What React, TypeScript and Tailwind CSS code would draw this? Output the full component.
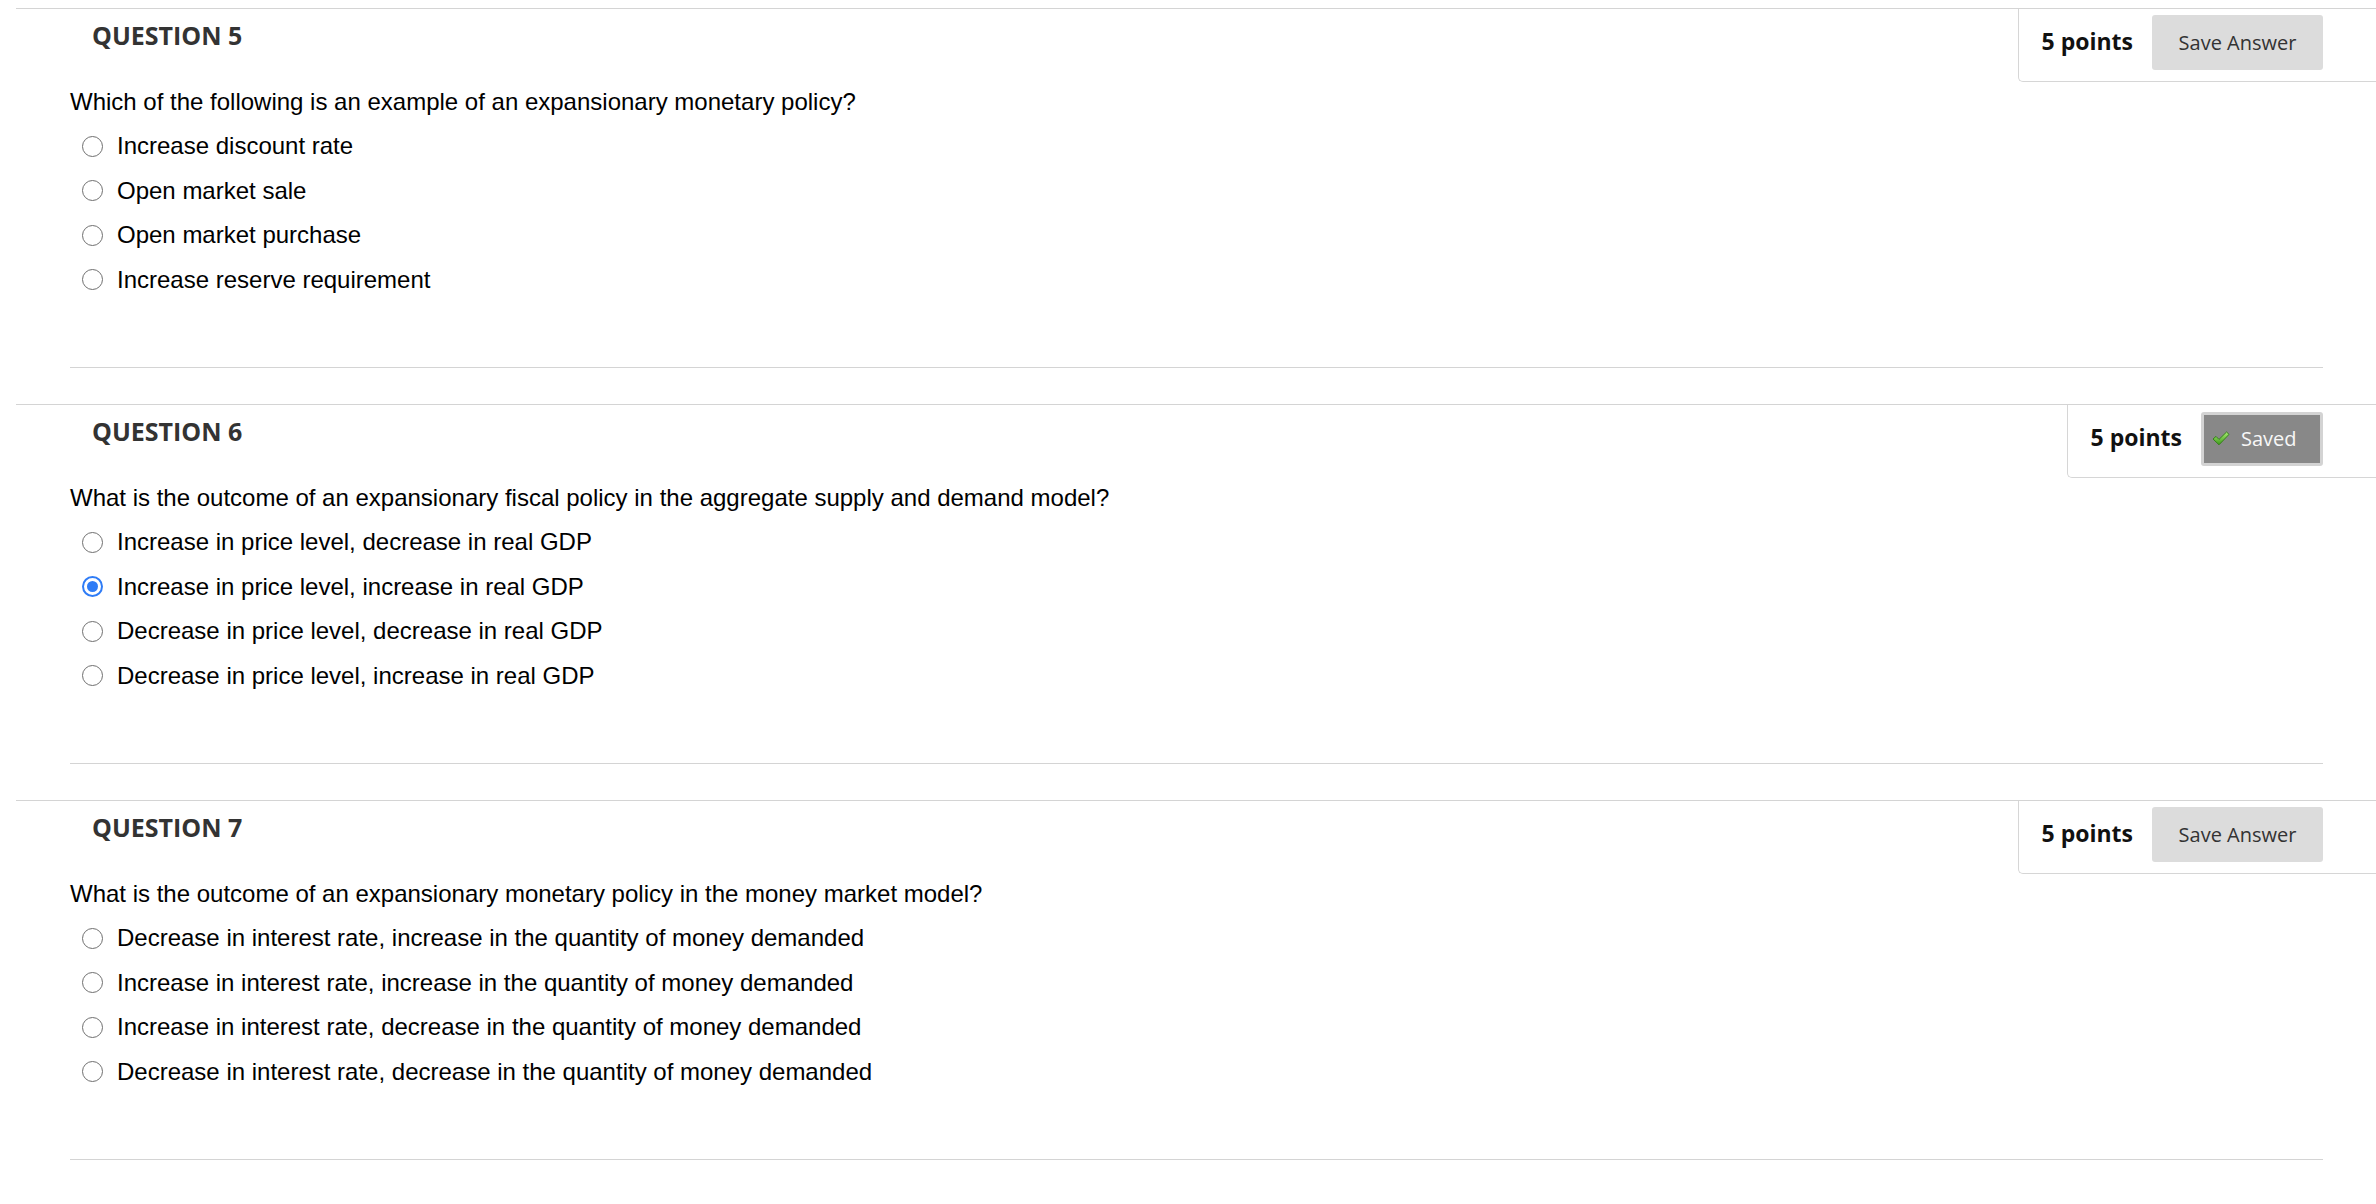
import React from "react";

type Q = {
  n: number;
  text: string;
  options: string[];
  selected: number | null;
  saved: boolean;
};

const questions: Q[] = [
  {
    n: 5,
    text: "Which of the following is an example of an expansionary monetary policy?",
    options: [
      "Increase discount rate",
      "Open market sale",
      "Open market purchase",
      "Increase reserve requirement",
    ],
    selected: null,
    saved: false,
  },
  {
    n: 6,
    text: "What is the outcome of an expansionary fiscal policy in the aggregate supply and demand model?",
    options: [
      "Increase in price level, decrease in real GDP",
      "Increase in price level, increase in real GDP",
      "Decrease in price level, decrease in real GDP",
      "Decrease in price level, increase in real GDP",
    ],
    selected: 1,
    saved: true,
  },
  {
    n: 7,
    text: "What is the outcome of an expansionary monetary policy in the money market model?",
    options: [
      "Decrease in interest rate, increase in the quantity of money demanded",
      "Increase in interest rate, increase in the quantity of money demanded",
      "Increase in interest rate, decrease in the quantity of money demanded",
      "Decrease in interest rate, decrease in the quantity of money demanded",
    ],
    selected: null,
    saved: false,
  },
];

function Check() {
  return (
    <svg width="18" height="15" viewBox="0 0 18 15" className="shrink-0">
      <defs>
        <linearGradient id="chk" x1="0" y1="0" x2="0" y2="1">
          <stop offset="0" stopColor="#a8ec72" />
          <stop offset="1" stopColor="#3e9a1c" />
        </linearGradient>
      </defs>
      <path
        d="M1 8 L4 5.4 L7 8.4 L14.6 1 L17 3.4 L7 13.8 Z"
        fill="url(#chk)"
        stroke="#2f7d14"
        strokeWidth="0.9"
        strokeLinejoin="round"
      />
    </svg>
  );
}

function Radio({ checked }: { checked: boolean }) {
  if (checked) {
    return (
      <div className="w-[21px] h-[21px] rounded-full border-[2.5px] border-[#2f7cf6] bg-white flex items-center justify-center shrink-0">
        <div className="w-[11px] h-[11px] rounded-full bg-[#2f7cf6]" />
      </div>
    );
  }
  return (
    <div className="w-[21px] h-[21px] rounded-full border-[1.5px] border-[#6f6f6f] bg-white shrink-0" />
  );
}

function Question({ q }: { q: Q }) {
  return (
    <div className="border-t border-[#d4d4d4] mb-[36px]">
      <div className="flex justify-between items-start h-[77px]">
        <h3 className="ml-[76px] mt-[9px] leading-[34px] font-['Open_Sans',sans-serif] font-bold text-[25px] text-[#333333]">
          QUESTION {q.n}
        </h3>
        <div className="h-[73px] border-l border-b border-[#d6d6d6] rounded-bl-[5px] pl-[23px] pr-[53px] pt-[6px] bg-white">
          <div className="flex items-center gap-[19px] h-[55px]">
            <span className="font-['Open_Sans',sans-serif] font-bold text-[23px] text-[#111111] leading-none -mt-[2px]">
              5 points
            </span>
            {q.saved ? (
              <div className="h-[54px] w-[122px] bg-[#888888] border-[3px] border-[#d3d3d3] rounded-[3px] flex items-center pl-[8px] gap-[11px]">
                <Check />
                <span className="font-['Open_Sans',sans-serif] text-[20px] text-[#f7f7f7] leading-none">
                  Saved
                </span>
              </div>
            ) : (
              <div className="h-[55px] w-[171px] bg-[#dcdcdc] rounded-[3px] flex items-center justify-center">
                <span className="font-['Open_Sans',sans-serif] text-[20px] text-[#333333] leading-none">
                  Save Answer
                </span>
              </div>
            )}
          </div>
        </div>
      </div>
      <div className="pl-[54px] pr-[53px] font-['Liberation_Sans',Arial,sans-serif] text-black">
        <p className="h-[32px] leading-[32px] text-[24px]">{q.text}</p>
        <div className="mt-[6px]">
          {q.options.map((o, i) => (
            <div key={i} className="h-[44.5px] flex items-center">
              <div className="ml-[12px] mr-[14px]">
                <Radio checked={q.selected === i} />
              </div>
              <span className="text-[24px] leading-[28px]">{o}</span>
            </div>
          ))}
        </div>
        <div className="mt-[65px] border-b border-[#d4d4d4]" />
      </div>
    </div>
  );
}

export default function App() {
  return (
    <div className="w-[2376px] h-[1204px] overflow-hidden bg-white pt-[8px] pl-[16px]">
      {questions.map((q) => (
        <Question key={q.n} q={q} />
      ))}
    </div>
  );
}
